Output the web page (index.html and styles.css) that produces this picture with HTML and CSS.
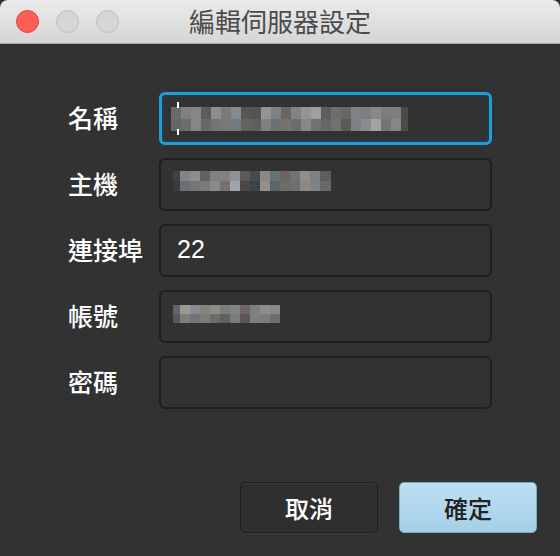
FILE: index.html
```html
<!DOCTYPE html>
<html lang="zh-Hant">
<head>
  <meta charset="UTF-8">
  <title>編輯伺服器設定</title>
  <link rel="stylesheet" href="styles.css">
</head>
<body>
  <div class="window">
    <div class="titlebar">
      <div class="lights">
        <span class="light close"></span>
        <span class="light"></span>
        <span class="light"></span>
      </div>
      <div class="title">編輯伺服器設定</div>
    </div>

    <div class="content">
      <div class="form">
        <div class="row">
          <label>名稱</label>
          <div class="field focused">
            <span class="caret"></span>
            <span class="blur blur-name"></span>
          </div>
        </div>
        <div class="row">
          <label>主機</label>
          <div class="field">
            <span class="blur blur-host"></span>
          </div>
        </div>
        <div class="row">
          <label>連接埠</label>
          <div class="field">
            <span class="value">22</span>
          </div>
        </div>
        <div class="row">
          <label>帳號</label>
          <div class="field">
            <span class="blur blur-user"></span>
          </div>
        </div>
        <div class="row">
          <label>密碼</label>
          <div class="field"></div>
        </div>
      </div>

      <div class="actions">
        <button class="btn">取消</button>
        <button class="btn primary">確定</button>
      </div>
    </div>
  </div>
</body>
</html>
```

FILE: styles.css
```css
body {
  margin: 0;
  padding: 0;
  background: #323232;
  font-family: "Noto Sans CJK TC", "Noto Sans", sans-serif;
}

.window {
  width: 560px;
  height: 556px;
  display: flex;
  flex-direction: column;
  background: #323232;
}

.titlebar {
  height: 43px;
  background: linear-gradient(to bottom, #ebebeb, #d5d5d5);
  border-bottom: 1px solid #a9a9a9;
  border-radius: 8px 8px 0 0;
  display: flex;
  align-items: center;
  position: relative;
}

.lights {
  display: flex;
  gap: 17px;
  padding-left: 16px;
}

.light {
  width: 23px;
  height: 23px;
  border-radius: 50%;
  background: #d6d6d6;
  border: 1px solid #bdbdbd;
  box-sizing: border-box;
}

.light.close {
  background: #fd5f57;
  border-color: #e0443e;
}

.title {
  position: absolute;
  left: 0;
  right: 0;
  top: 3px;
  text-align: center;
  font-size: 26px;
  color: #4b4b4b;
  line-height: 36px;
}

.content {
  flex: 1;
  display: flex;
  flex-direction: column;
  padding: 48px 68px 0 68px;
}

.form {
  display: flex;
  flex-direction: column;
  gap: 13px;
}

.row {
  display: flex;
  align-items: center;
  height: 53px;
}

.row label {
  width: 91px;
  color: #ffffff;
  font-size: 25px;
  font-weight: 500;
  margin-top: -4px;
  white-space: nowrap;
}

.field {
  width: 333px;
  height: 53px;
  box-sizing: border-box;
  border: 2px solid #1f1f1f;
  border-radius: 6px;
  background: #323232;
  display: flex;
  align-items: center;
  padding-left: 12px;
  position: relative;
}

.field.focused {
  border: 3px solid #1a9fda;
  box-shadow: inset 0 0 0 2px #2a3a40;
  padding-left: 9px;
}

.caret {
  position: absolute;
  left: 15px;
  top: 7px;
  width: 2px;
  height: 33px;
  background: linear-gradient(to bottom, #fff 0, #fff 6px, transparent 6px, transparent 27px, #fff 27px);
}

.value {
  color: #ffffff;
  font-family: "Liberation Sans", Arial, sans-serif;
  font-size: 25px;
  margin-left: 4px;
  margin-top: -3px;
}

.blur {
  display: block;
  height: 24px;
}

.blur-name {
  width: 237px;
  margin-top: 1px;
  background:
    linear-gradient(to right,
      #6a6a6a 0 10px, #7e8183 10px 20px, #878685 20px 30px, #5e5c59 30px 40px,
      #8c8e91 40px 50px, #7f7a77 50px 60px, #848b95 60px 70px, #5c554f 70px 80px,
      #50555a 80px 90px, #969390 90px 100px, #7b8287 100px 110px, #6b645f 110px 120px,
      #7e8487 120px 130px, #959493 130px 140px, #9ca0a2 140px 150px, #5d5d5b 150px 160px,
      #6c6f6c 160px 170px, #6a6662 170px 180px, #7f8488 180px 190px, #7b7d80 190px 200px,
      #888789 200px 210px, #7a7c7d 210px 220px, #7c7e7f 220px 230px, #4e4a45 230px 237px)
      top / 100% 50% no-repeat,
    linear-gradient(to right,
      #666666 0 10px, #6c6e6e 10px 20px, #868686 20px 30px, #6a6866 30px 40px,
      #747474 40px 50px, #787878 50px 60px, #757a80 60px 70px, #66625d 70px 80px,
      #5f5f5f 80px 90px, #838180 90px 100px, #6c7074 100px 110px, #75736f 110px 120px,
      #6a6c6e 120px 130px, #8a8886 130px 140px, #6f7173 140px 150px, #676664 150px 160px,
      #6e716f 160px 170px, #5e5955 170px 180px, #7e8184 180px 190px, #8b8a8e 190px 200px,
      #a5a29f 200px 210px, #72757a 210px 220px, #868783 220px 230px, #4e4a45 230px 237px)
      bottom / 100% 50% no-repeat;
}

.blur-host {
  width: 158px;
  height: 20px;
  margin-top: -8px;
  background:
    linear-gradient(to right,
      #3e4145 0 7px, #7f8588 7px 17px, #8d8f8e 17px 27px, #65625e 27px 37px,
      #7f8181 37px 47px, #838280 47px 57px, #8d939b 57px 67px, #5f5951 67px 77px,
      #474a4e 77px 87px, #8b8886 87px 97px, #66727a 97px 107px, #6a6561 107px 117px,
      #6f7376 117px 127px, #918e8a 127px 137px, #7e8182 137px 147px, #5f5e5c 147px 158px)
      top / 100% 50% no-repeat,
    linear-gradient(to right,
      #3a3b3d 0 7px, #6c7073 7px 17px, #767675 17px 27px, #7d7b79 27px 37px,
      #898a8b 37px 47px, #747372 47px 57px, #a1a4aa 57px 67px, #4a4845 67px 77px,
      #3f4246 77px 87px, #938f8b 87px 97px, #5b6468 97px 107px, #6f6b68 107px 117px,
      #6d7073 117px 127px, #8c8985 127px 137px, #808384 137px 147px, #6b6967 147px 158px)
      bottom / 100% 50% no-repeat;
}

.blur-user {
  width: 107px;
  height: 18px;
  margin-top: -5px;
  background:
    linear-gradient(to right,
      #5f6468 0 7px, #9c9894 7px 17px, #8a8c90 17px 27px, #838380 27px 37px,
      #8f8c84 37px 47px, #7b7c7d 47px 57px, #7e8386 57px 67px, #6f6562 67px 77px,
      #7d7f80 77px 87px, #8c8d8f 87px 97px, #8c8985 97px 107px)
      top / 100% 50% no-repeat,
    linear-gradient(to right,
      #55595c 0 7px, #817c77 7px 17px, #737477 17px 27px, #7b7c77 27px 37px,
      #6b6b68 37px 47px, #5f5f60 47px 57px, #7a7c7c 57px 67px, #58585a 67px 77px,
      #7d7f80 77px 87px, #7b7c7e 87px 97px, #6e6e6e 97px 107px)
      bottom / 100% 50% no-repeat;
}

.actions {
  display: flex;
  justify-content: flex-end;
  gap: 21px;
  margin-top: auto;
  margin-right: -45px;
  margin-bottom: 23px;
}

.btn {
  width: 138px;
  height: 51px;
  box-sizing: border-box;
  border: 1px solid #1c1c1c;
  border-radius: 5px;
  background: #2f2f2f;
  box-shadow: inset 0 1px 0 #3a3a3a, 0 1px 0 #3c3c3c;
  color: #ffffff;
  font-family: "Noto Sans CJK TC", "Noto Sans", sans-serif;
  font-size: 24px;
  font-weight: 500;
  padding: 0;
  cursor: pointer;
}

.btn.primary {
  background: linear-gradient(to bottom, #bde0f2, #a5cfe7);
  border-color: #7ea9c4;
  box-shadow: none;
  color: #222222;
}
```
